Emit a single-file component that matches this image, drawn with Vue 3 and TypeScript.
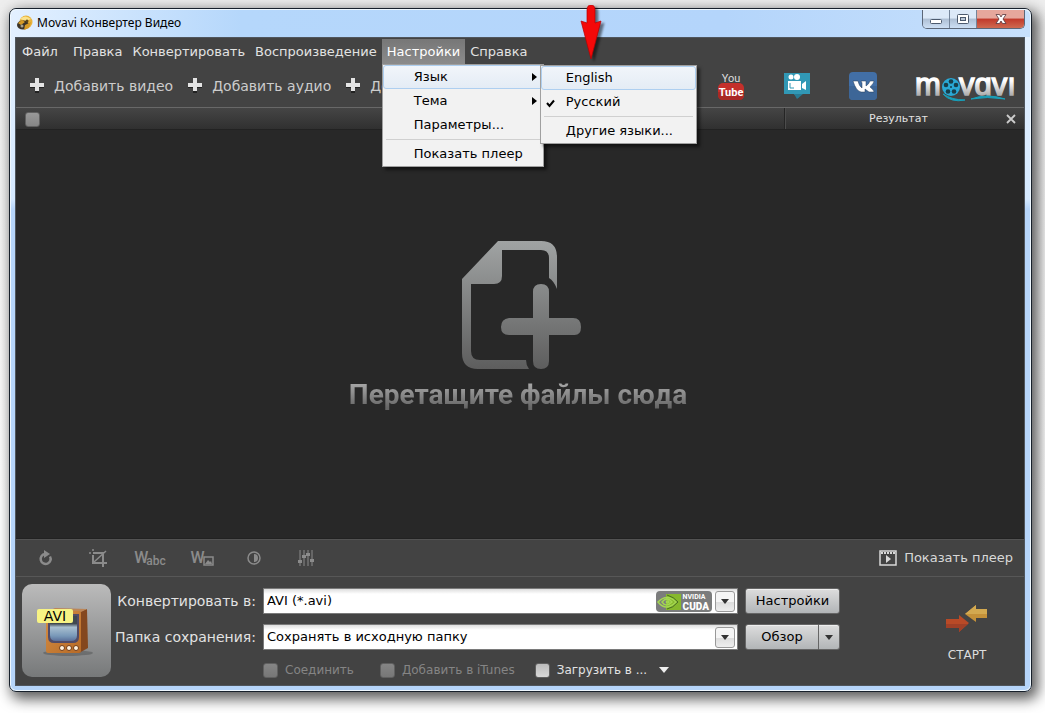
<script setup lang="ts">
import { ref } from 'vue'

const menus = ['Файл', 'Правка', 'Конвертировать', 'Воспроизведение', 'Настройки', 'Справка']
const addButtons = ['Добавить видео', 'Добавить аудио', 'Добавить']
const format = ref('AVI (*.avi)')
const folder = ref('Сохранять в исходную папку')
</script>

<template>
  <div class="desktop">
    <main class="window">
      <header class="titlebar">
        <svg class="app-icon" width="16" height="16" viewBox="0 0 16 16" aria-hidden="true">
          <circle cx="9" cy="7" r="6.5" fill="#e8b33a" />
          <path d="M3 4Q8-1 14 4L9 6Z" fill="#fbe28c" />
          <ellipse cx="6" cy="10" rx="6" ry="4.5" fill="#3b3428" />
          <path d="M1 8l4-3 3 2-4 3zM8 10l6-3-2 6-5 2z" fill="#d69a24" />
          <circle cx="5" cy="11" r="1.5" fill="#a8a28c" />
          <circle cx="10" cy="6" r="1.5" fill="#5c4517" />
        </svg>
        <h1>Movavi Конвертер Видео</h1>
        <div class="window-buttons">
          <button type="button" aria-label="Свернуть">
            <svg width="14" height="14" viewBox="0 0 14 14"><rect x="1.5" y="7.500" width="11" height="4" rx="1" fill="#fff" stroke="#4c5a6e" /></svg>
          </button>
          <button type="button" aria-label="Развернуть">
            <svg width="14" height="14" viewBox="0 0 14 14"><rect x="1.500" y="2.500" width="11" height="9" rx="1" fill="#fff" stroke="#4c5a6e" /><rect x="4.500" y="5.500" width="5" height="3" fill="#b9c6d6" stroke="#4c5a6e" /></svg>
          </button>
          <button type="button" class="close" aria-label="Закрыть">
            <svg width="14" height="14" viewBox="0 0 14 14"><path d="M2 2.500h3.500L7 5l1.500-2.500H12L9 7l3 4.500H8.500L7 9l-1.500 2.500H2L5 7z" fill="#fff" stroke="#56353b" stroke-width=".8" /></svg>
          </button>
        </div>
      </header>

      <div class="client">
        <nav class="menubar">
          <div v-for="item in menus" :key="item" class="menu-slot">
            <button type="button" :class="{ open: item === 'Настройки' }">{{ item }}</button>
            <div v-if="item === 'Настройки'" class="menu">
              <div class="menu-slot">
                <button type="button" class="selected">Язык<svg class="arrow" width="5" height="8" viewBox="0 0 5 8"><path d="M0 0l5 4-5 4z" /></svg></button>
                <div class="menu submenu">
                  <button type="button" class="selected">English</button>
                  <button type="button"><svg class="check" width="9" height="9" viewBox="0 0 9 9"><path d="M1 4l2.500 3L8 1.500" fill="none" stroke="#000" stroke-width="2" /></svg>Русский</button>
                  <hr />
                  <button type="button">Другие языки...</button>
                </div>
              </div>
              <button type="button">Тема<svg class="arrow" width="5" height="8" viewBox="0 0 5 8"><path d="M0 0l5 4-5 4z" /></svg></button>
              <button type="button">Параметры...</button>
              <hr />
              <button type="button">Показать плеер</button>
            </div>
          </div>
        </nav>

        <div class="toolbar">
          <button v-for="label in addButtons" :key="label" type="button" class="add">
            <svg width="14" height="15" viewBox="0 0 14 15"><path d="M5 2h4v4h5v4H9v5H5v-5H0V6h5z" fill="#222" /><path d="M5 0h4v5h5v4H9v4H5V9H0V5h5z" fill="#e4e4e4" /></svg>
            <span>{{ label }}</span>
          </button>
          <div class="services">
            <a href="#" aria-label="YouTube">
              <svg width="28" height="30" viewBox="0 0 28 30">
                <rect x="1" y="12" width="26" height="17" rx="5" fill="#c4302b" />
                <path d="M1 21h26v3q0 5-5 5H6q-5 0-5-5z" fill="#a92824" />
                <text x="14" y="11" text-anchor="middle" font-size="11" fill="#ddd">You</text>
                <text x="14" y="25" text-anchor="middle" font-size="11" font-weight="bold" fill="#fff">Tube</text>
              </svg>
            </a>
            <a href="#" aria-label="Видео">
              <svg width="28" height="30" viewBox="0 0 28 30">
                <path d="M1 2h26v21H18l-3 4-4-4H1z" fill="#3198b5" /><path d="M11 23h9l-6 5z" fill="#277b94" />
                <circle cx="8" cy="6" r="2.500" fill="#fff" /><circle cx="14" cy="6" r="3" fill="#fff" />
                <path d="M5 10h13v9H5zM19 13l4-3v9l-4-2z" fill="#fff" /><path d="M7 12v5h4" fill="none" stroke="#3198b5" />
              </svg>
            </a>
            <a href="#" aria-label="ВКонтакте">
              <svg width="28" height="30" viewBox="0 0 28 30">
                <rect y="1" width="28" height="28" rx="4" fill="#426fa6" /><path d="M0 15h28v10q0 4-4 4H4q-4 0-4-4z" fill="#3d6697" />
                <path d="M4 10h5q1 5 4 7v-5l-1-2h5v5q3-2 4-5h4q0 2-4 6 4 3 4 5h-5l-4-3v3h-4Q7 20 4 10z" fill="#fff" stroke="#243c58" stroke-width=".5" />
              </svg>
            </a>
          </div>
          <svg class="logo" width="100" height="36" viewBox="0 0 100 36" aria-label="movavi" role="img">
            <defs><linearGradient id="silver" x1="0" y1="0" x2="0" y2="1"><stop offset="0.400" stop-color="#fff" /><stop offset="0.900" stop-color="#999" /></linearGradient></defs>
            <g font-family="Liberation Sans, sans-serif" font-size="31" fill="url(#silver)" stroke="url(#silver)" stroke-width="1.500">
              <text x="0" y="27">m</text><text x="44" y="27">vɑvı</text>
            </g>
            <path d="M28 26q9 6 22 6-14 3-22-6zM56 31q16-6 34 0-18-3-34 0z" fill="#18a0ba" stroke="#18a0ba" />
            <circle cx="36" cy="19" r="9" fill="#29a9d6" />
            <g fill="#173e4b"><circle cx="36" cy="13.500" r="2.300" /><circle cx="31" cy="17" r="2.300" /><circle cx="41" cy="17" r="2.300" /><circle cx="33" cy="23.500" r="2.300" /><circle cx="39" cy="23.500" r="2.300" /><circle cx="36" cy="19" r="1" /></g>
          </svg>
        </div>

        <div class="list-head">
          <div class="select-all"><input type="checkbox" aria-label="Выбрать все" disabled /></div>
          <div class="result"><span>Результат</span>
            <button type="button" aria-label="Очистить"><svg width="10" height="10" viewBox="0 0 10 10"><path d="M1 1l8 8M9 1L1 9" stroke="#ccc" stroke-width="1.800" /></svg></button>
          </div>
        </div>

        <section class="drop">
          <svg width="128" height="130" viewBox="-8 0 128 130" aria-hidden="true">
            <defs><linearGradient id="steel" gradientUnits="userSpaceOnUse" x1="0" y1="0" x2="0" y2="130"><stop offset="0" stop-color="#a1a4a4" /><stop offset="1" stop-color="#5d5d5d" /></linearGradient></defs>
            <path fill="url(#steel)" fill-rule="evenodd" d="M36 1H79Q95 1 95 17V49Q92 41 87 38V18Q87 10 79 10H40V36Q40 44 32 44H9V111Q9 120 18 120H64Q64 125 67 129H16Q0 129 0 113V39Z" />
            <path fill="url(#steel)" d="M71 52q0-8 8-8t8 8v26h24q8 0 8 9t-8 8H87v26q0 8-8 8t-8-8V95H47q-8 0-8-8t8-9h24z" />
          </svg>
          <p>Перетащите файлы сюда</p>
        </section>

        <div class="tools">
          <button type="button" aria-label="Повернуть"><svg width="16" height="18" viewBox="0 0 16 18"><path d="M12 7.500A5 5 0 1 1 7 5" fill="none" stroke="#8b8b8b" stroke-width="2.500" /><path d="M6 1l6 4-6 4z" fill="#8b8b8b" /></svg></button>
          <button type="button" aria-label="Кадрировать"><svg width="18" height="18" viewBox="0 0 18 18"><path d="M4 4h10v10M4 6v8h14M14 14v4" fill="none" stroke="#8b8b8b" stroke-width="2" /><path d="M0 4h2M4 0v2M5 13L17 2" fill="none" stroke="#8b8b8b" stroke-width="1.500" /></svg></button>
          <button type="button" class="word"><b>W</b><span>abc</span></button>
          <button type="button" class="word" aria-label="Изображение"><b>W</b><svg width="11" height="10" viewBox="0 0 11 10"><path d="M1 1h9v8H1z" fill="none" stroke="#8b8b8b" stroke-width="1.500" /><path d="M2 8l3-4 2 2 1-1 1 3z" fill="#8b8b8b" /></svg></button>
          <button type="button" aria-label="Контраст"><svg width="14" height="14" viewBox="0 0 14 14"><circle cx="7" cy="7" r="6" fill="none" stroke="#8b8b8b" stroke-width="1.500" /><path d="M7 3a4 4 0 0 1 0 8z" fill="#8b8b8b" /></svg></button>
          <button type="button" aria-label="Уровни"><svg width="16" height="16" viewBox="0 0 16 16"><path d="M2 0v16M6 0v16M10 0v16M14 0v16" stroke="#8b8b8b" /><path d="M0 10h4v3H0zM4 5h4v3H4zM8 3h4v3H8zM12 9h4v3h-4z" fill="#8b8b8b" /></svg></button>
          <button type="button" class="player"><svg width="18" height="16" viewBox="0 0 18 16"><path d="M1 1h16v14H1z" fill="none" stroke="#d8d8d8" stroke-width="1.500" /><path d="M2 3h14" stroke="#d8d8d8" stroke-width="2" stroke-dasharray="2 1" /><path d="M7 5l5 4-5 4z" fill="#d8d8d8" /></svg>Показать плеер</button>
        </div>

        <footer class="output">
          <div class="thumb">
            <svg width="60" height="60" viewBox="0 0 60 60" aria-hidden="true">
              <defs>
                <linearGradient id="screen" x1="0" y1="0" x2="0" y2="1"><stop offset="0.300" stop-color="#40484f" /><stop offset="0.450" stop-color="#a9bfd0" /><stop offset="0.800" stop-color="#7898b8" /><stop offset="1" stop-color="#5a6f99" /></linearGradient>
                <linearGradient id="wood" x1="0" y1="0" x2="1" y2="1"><stop offset="0" stop-color="#d68f45" /><stop offset="1" stop-color="#b76a26" /></linearGradient>
              </defs>
              <ellipse cx="31" cy="51" rx="25" ry="3" fill="#000" opacity=".2" />
              <path d="M42 10l8-3 1 39-9 5z" fill="#84471e" />
              <path d="M9 10l9-4 32 1-8 4z" fill="#bc8556" />
              <rect x="9" y="9" width="35" height="42" rx="2" fill="url(#wood)" />
              <path d="M11 12h31v23q0 6-6 6H17q-6 0-6-6z" fill="#514b67" />
              <path d="M13 14h27v19q0 6-6 6H19q-6 0-6-6z" fill="url(#screen)" />
              <g fill="#fff2df" stroke="#713c18"><circle cx="25" cy="46" r="2.500" /><circle cx="32" cy="46" r="2.500" /><circle cx="39" cy="46" r="2.500" /></g>
            </svg>
            <span>AVI</span>
          </div>

          <div class="fields">
            <label for="format">Конвертировать в:</label>
            <div class="combo">
              <select id="format" v-model="format"><option>AVI (*.avi)</option></select>
              <span class="cuda">
                <svg width="24" height="16" viewBox="0 0 24 16"><path d="M9 0h15v16H9z" fill="#86b82d" /><path d="M1 8Q10-1 19 8 9 18 1 8zM5 8q5-6 10 0-6 6-10 0zM9 8q2-2 3 0-2 2-3 0" fill="none" stroke="#a4d751" stroke-width="1.500" /><path d="M10 1q7 2 11 7-5 6-11 7" fill="none" stroke="#496e23" /></svg>
                <span>NVIDIA<b>CUDA</b></span>
              </span>
              <i class="drop-arrow"></i>
            </div>
            <button type="button" class="push">Настройки</button>

            <label for="folder">Папка сохранения:</label>
            <div class="combo">
              <select id="folder" v-model="folder"><option>Сохранять в исходную папку</option></select>
              <i class="drop-arrow"></i>
            </div>
            <div class="split">
              <button type="button" class="push">Обзор</button>
              <button type="button" class="push more" aria-label="Другие папки"><i></i></button>
            </div>

            <div class="options">
              <label class="off"><input type="checkbox" disabled />Соединить</label>
              <label class="off"><input type="checkbox" disabled />Добавить в iTunes</label>
              <label><input type="checkbox" />Загрузить в ...</label>
              <button type="button" aria-label="Выбрать сервис"><svg width="10" height="6" viewBox="0 0 10 6"><path d="M0 0h10L5 6z" fill="#eee" /></svg></button>
            </div>
          </div>

          <button type="button" class="start">
            <svg width="42" height="30" viewBox="0 0 42 30"><path d="M0 15h13v-4l10 8-10 9v-4H0z" fill="#b94a27" /><path d="M0 20h22l-9 8v-4H0z" fill="#a04027" /><path d="M41 5H30V1l-11 9 11 8v-4h11z" fill="#c49139" /><path d="M41 5H30V1l-11 9h22z" fill="#d3a950" /></svg>
            <span>СТАРТ</span>
          </button>
        </footer>
      </div>
    </main>
    <svg class="pointer" width="28" height="60" viewBox="0 0 28 60" aria-hidden="true"><path d="M9 5q0-5 4-5t4 5v13l6-2-10 38L3 16l6 2z" fill="#f40909" stroke="#b80000" stroke-width=".7" /></svg>
  </div>
</template>

<style>
body { margin: 0; background: #fff; }
</style>

<style scoped>
* { box-sizing: border-box; }
button, select, input { font: inherit; color: inherit; margin: 0; padding: 0; border: 0; background: none; }
svg { display: block; }
.desktop { position: relative; min-height: 100vh; display: flex; padding: 8px 13px 21px 9px; overflow: hidden; background: linear-gradient(#eee, #fff 70%); font: 13px/18px "DejaVu Sans", Verdana, sans-serif; color: #e2e2e2; }
.window { flex: 1; display: flex; flex-direction: column; padding: 0 6px 5px 5px; border: 1px solid #17202b; border-radius: 7px; background: linear-gradient(#e6f2ff, #d5e9ff 190px, #b6d5fa 200px, #b6d5fa); box-shadow: inset 0 0 0 1px #eff8ff, 4px 5px 14px 2px rgba(0, 0, 0, .65); }
.titlebar { display: flex; align-items: flex-start; height: 28px; margin: 0 -5px 0 -4px; padding-left: 6px; background: linear-gradient(90deg, #e3f0ff, #b5d7fb 230px, #b4d5fb 70%, #c7e0fc); border-radius: 6px 6px 0 0; border-top: 1px solid #eff8ff; }
.app-icon { margin-top: 5px; }
h1 { margin: 4px 0 0 4px; font: 12px/18px "Noto Sans", sans-serif; color: #000; flex: 1; }
.window-buttons { display: flex; border: 1px solid #5c6778; border-top: 0; border-radius: 0 0 5px 5px; overflow: hidden; margin-right: 5px; }
.window-buttons button { width: 27px; height: 18px; display: grid; place-items: center; border-right: 1px solid #75859a; background: linear-gradient(#dce9f8 45%, #aebfd4 50%, #cddff4); }
.window-buttons .close { width: 47px; border: 0; background: linear-gradient(#e6a79c 45%, #c1392b 50%, #cf6a50); }
.client { flex: 1; display: flex; flex-direction: column; background: #434343; border: 1px solid #50565d; }
.menubar { display: flex; height: 26px; padding: 1px 0 0 1px; }
.menu-slot { position: relative; }
.menubar > .menu-slot > button { height: 25px; padding: 0 5px; white-space: nowrap; }
.menubar > .menu-slot:first-child { margin-right: 5px; }
.menubar .open { background: linear-gradient(#777, #8b8b8b); color: #fff; }
.menu { position: absolute; z-index: 3; top: 25px; left: 0; width: 162px; border: 1px solid #a0a0a0; background: #f2f2f2; box-shadow: 3px 3px 3px rgba(0, 0, 0, .5); color: #000; }
.menu button { position: relative; display: block; width: 100%; height: 24px; padding-left: 30px; text-align: left; border: 1px solid transparent; border-radius: 3px; white-space: nowrap; }
.menu .selected { border-color: #aecff0; background: linear-gradient(#f1f5fa, #e4ecf5); }
.menu hr { height: 1px; margin: 2px 3px; border: 0; background: #d0d0d0; }
.submenu { top: 0; left: 157px; width: 157px; }
.submenu button { padding-left: 24px; }
.arrow { position: absolute; right: 5px; top: 7px; }
.check { position: absolute; left: 4px; top: 8px; }
.toolbar { display: flex; align-items: center; height: 43px; padding: 0 9px 0 14px; font-size: 14px; }
.add { display: flex; align-items: center; gap: 10px; margin-right: 15px; color: #ccc; white-space: nowrap; }
.services { display: flex; gap: 38px; margin-left: auto; margin-right: 38px; }
.services text { font-family: Roboto, sans-serif; }
.logo { overflow: visible; }
.list-head { display: flex; height: 23px; border-top: 1px solid #686868; border-bottom: 1px solid #222; background: linear-gradient(#454545, #303030); font-size: 11px; }
.select-all { flex: 1; padding: 4px 9px; }
input[type="checkbox"] { appearance: none; flex: none; width: 15px; height: 15px; border: 1px solid #606060; border-radius: 3px; background: linear-gradient(#bbb, #d8d8d8); display: block; }
input:disabled { background: linear-gradient(#858585, #777); }
.list-head input:disabled { background: linear-gradient(#999, #858585); }
.result { width: 240px; display: flex; align-items: center; padding: 0 8px 0 6px; border-left: 1px solid #252525; box-shadow: inset 1px 0 #4c4c4c; }
.result span { flex: 1; text-align: center; }
.drop { flex: 1; display: flex; flex-direction: column; align-items: center; justify-content: center; background: #282828; border-bottom: 1px solid #222; padding: 0 4px 16px 0; }
.drop p { margin: 7px 0 0; font: bold 28px/36px Roboto, sans-serif; color: transparent; background: linear-gradient(#aaa 15%, #666 85%); background-clip: text; }
.tools { display: flex; align-items: center; height: 38px; padding: 0 11px 0 4px; border-top: 1px solid #535353; border-bottom: 1px solid #575757; color: #8b8b8b; }
.tools > button { width: 52px; height: 28px; display: flex; align-items: center; justify-content: center; }
.tools .player { width: auto; margin-left: auto; gap: 7px; color: #d8d8d8; }
.word b { font: 500 16px/20px Roboto, sans-serif; }
.word span { font: 500 12px/14px Roboto, sans-serif; }
.word span, .word svg { margin: 6px 0 0 -2px; }
.output { display: flex; height: 108px; padding: 7px 35px 0 6px; }
.thumb { position: relative; width: 89px; height: 93px; padding: 18px 15px; border-radius: 10px; background: linear-gradient(#bbb, #77797a); }
.thumb span { position: absolute; left: 15px; top: 25px; width: 36px; height: 14px; border-radius: 2px; background: #f7f384; color: #000; text-align: center; font: 14px/14px "DejaVu Sans", sans-serif; }
.fields { flex: 1; display: grid; grid-template-columns: 145px 1fr 95px; grid-template-rows: 26px 26px 20px; gap: 10px 7px; margin-right: 105px; padding-top: 4px; align-items: center; }
.fields > label { text-align: right; font-size: 14px; white-space: nowrap; }
.combo { position: relative; display: flex; }
select { width: 100%; height: 26px; padding-left: 3px; appearance: none; background: linear-gradient(#ddd, #fff 5px); color: #000; border: 1px solid #7a7a7a; }
.drop-arrow { position: absolute; right: 3px; top: 3px; width: 20px; height: 21px; border: 1px solid #999; border-radius: 3px; background: linear-gradient(#f5f5f5 50%, #ddd 52%, #eee); pointer-events: none; display: grid; place-items: center; }
.drop-arrow::after, .more i { content: ""; width: 0; height: 0; border: 4px solid transparent; border-top: 5px solid #333; border-bottom: 0; }
.cuda { position: absolute; right: 26px; top: 3px; width: 56px; height: 21px; padding: 0 3px 0 1px; border-radius: 4px; background: #7b7c7c; display: flex; align-items: center; justify-content: space-between; color: #fff; font: bold 7px/9px Roboto, sans-serif; pointer-events: none; }
.cuda b { display: block; font-size: 10px; }
.push { width: 100%; height: 26px; border: 1px solid #666; border-radius: 3px; background: linear-gradient(#ddd, #b2b5b7); box-shadow: inset 0 1px #eee; color: #000; }
.split { display: grid; grid-template-columns: 1fr 21px; }
.split .push:first-child { border-radius: 3px 0 0 3px; }
.split .more { border-left: 0; border-radius: 0 3px 3px 0; display: grid; place-items: center; }
.options { grid-column: 2 / 4; display: flex; align-items: center; font-size: 12px; white-space: nowrap; }
.options label { display: flex; align-items: center; gap: 7px; margin-right: 26px; }
.options label:nth-child(2) { margin-right: 20px; }
.options label:nth-child(3) { margin-right: 12px; }
.options .off { color: #858585; }
.start { width: 44px; display: flex; flex-direction: column; align-items: center; align-self: flex-start; margin-top: 20px; gap: 12px; font-size: 12px; color: #ddd; }
.pointer { position: absolute; z-index: 5; left: 578px; top: 5px; filter: drop-shadow(3px 2px 1px rgba(0, 0, 0, .5)); }
</style>
